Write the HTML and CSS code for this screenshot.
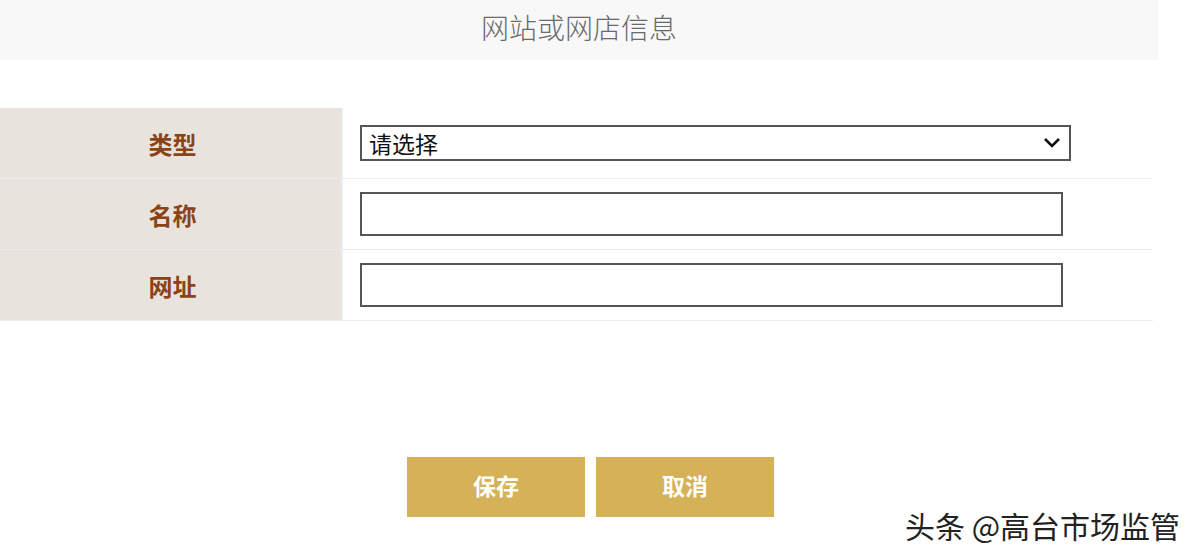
FILE: index.html
```html
<!DOCTYPE html>
<html lang="zh-CN">
<head>
  <meta charset="UTF-8">
  <title>网站或网店信息</title>
  <link rel="stylesheet" href="styles.css">
</head>
<body>

  <div class="page">
    <div class="title-bar">网站或网店信息</div>

    <div class="form-table">
      <div class="label">类型</div>
      <div class="field">
        <div class="select">
          <span>请选择</span>
          <svg class="chev" width="18" height="12" viewBox="0 0 18 12"><path d="M2 2 L9 9 L16 2" fill="none" stroke="#111" stroke-width="2.6"/></svg>
        </div>
      </div>

      <div class="label">名称</div>
      <div class="field"><div class="text-input"></div></div>

      <div class="label">网址</div>
      <div class="field"><div class="text-input"></div></div>
    </div>

    <div class="actions">
      <button class="btn">保存</button>
      <button class="btn">取消</button>
    </div>

    <div class="watermark">头条 @高台市场监管</div>
  </div>

</body>
</html>
```

FILE: styles.css
```css
body { margin: 0; background-color: #fff; font-family: "Noto Sans CJK SC", "Noto Sans", sans-serif; }
.page { position: relative; width: 1202px; height: 558px; overflow: hidden; }

.title-bar { width: 1158px; height: 60px; background-color: #f8f8f9; color: #6a6a6a; font-size: 28px; font-weight: 300; text-align: center; line-height: 54px; }

.form-table { margin-top: 48px; width: 1153px; display: grid; grid-template-columns: 341px 1fr; grid-auto-rows: 70px; row-gap: 1px; column-gap: 2px; background-color: #ececec; border-bottom: 1px solid #ececec; }
.label { background-color: #e9e3de; color: #8a4316; font-size: 24px; font-weight: bold; display: flex; align-items: center; justify-content: center; padding-left: 4px; }
.field { background-color: #fff; display: flex; align-items: center; padding-left: 17px; }

.select { width: 711px; height: 36px; box-sizing: border-box; border: 2px solid #555; display: flex; align-items: center; justify-content: space-between; padding: 0 8px 0 7px; font-size: 23px; color: #111; }
.select span { line-height: 1; }
.text-input { width: 703px; height: 44px; box-sizing: border-box; border: 2px solid #555; background: #fff; }

.actions { display: flex; gap: 11px; padding-left: 407px; margin-top: 136px; }
.btn { width: 178px; height: 60px; border: none; background-color: #d5b157; color: #fff; font-family: inherit; font-size: 23px; font-weight: bold; cursor: pointer; padding: 0 0 4px 0; }

.watermark { position: absolute; left: 905px; top: 503px; font-size: 30px; color: #222; text-shadow: 1px 1px 0 #fff, -1px -1px 0 #fff; }
```
